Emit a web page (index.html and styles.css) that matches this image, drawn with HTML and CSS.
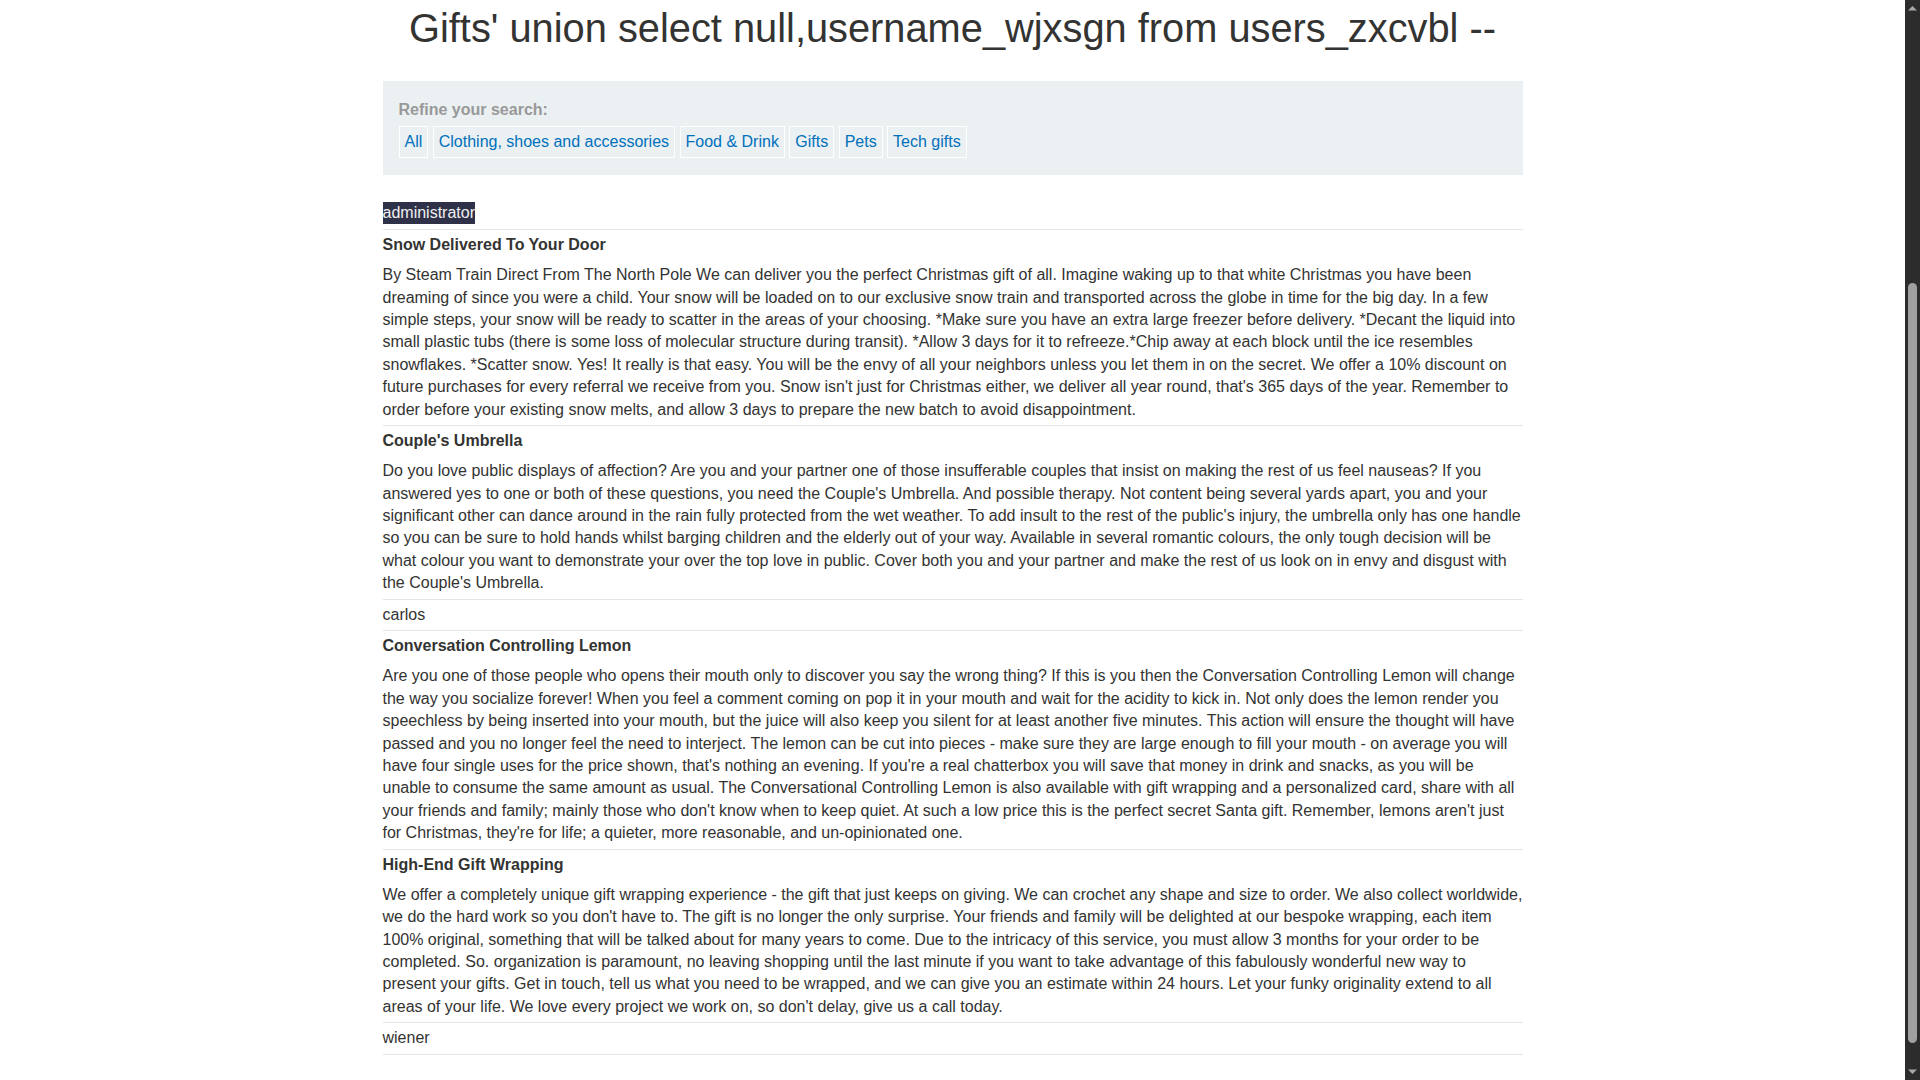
FILE: index.html
```html
<!DOCTYPE html>
<html lang="en">
<head>
<meta charset="utf-8">
<title>SQL injection UNION attack, retrieving data from other tables</title>
<link rel="stylesheet" href="styles.css">
</head>
<body>
<div class="viewport">
  <section class="container">
    <section class="page-heading">
      <h1 class="title">Gifts' union select null,username_wjxsgn from users_zxcvbl --</h1>
    </section>
    <section class="filter">
      <label class="filter-label">Refine your search:</label>
      <div class="filter-list">
        <a class="filter-btn" href="#">All</a>
        <a class="filter-btn" href="#">Clothing, shoes and accessories</a>
        <a class="filter-btn" href="#">Food &amp; Drink</a>
        <a class="filter-btn" href="#">Gifts</a>
        <a class="filter-btn" href="#">Pets</a>
        <a class="filter-btn" href="#">Tech gifts</a>
      </div>
    </section>
    <table class="products">
      <tbody>
        <tr class="row"><td class="cell"><span class="hl">administrator</span></td></tr>
        <tr class="name-row"><th class="name">Snow Delivered To Your Door</th></tr>
        <tr class="row"><td class="cell">By Steam Train Direct From The North Pole We can deliver you the perfect Christmas gift of all. Imagine waking up to that white Christmas you have been dreaming of since you were a child. Your snow will be loaded on to our exclusive snow train and transported across the globe in time for the big day. In a few simple steps, your snow will be ready to scatter in the areas of your choosing. *Make sure you have an extra large freezer before delivery. *Decant the liquid into small plastic tubs (there is some loss of molecular structure during transit). *Allow 3 days for it to refreeze.*Chip away at each block until the ice resembles snowflakes. *Scatter snow. Yes! It really is that easy. You will be the envy of all your neighbors unless you let them in on the secret. We offer a 10% discount on future purchases for every referral we receive from you. Snow isn't just for Christmas either, we deliver all year round, that's 365 days of the year. Remember to order before your existing snow melts, and allow 3 days to prepare the new batch to avoid disappointment.</td></tr>
        <tr class="name-row"><th class="name">Couple's Umbrella</th></tr>
        <tr class="row"><td class="cell">Do you love public displays of affection? Are you and your partner one of those insufferable couples that insist on making the rest of us feel nauseas? If you answered yes to one or both of these questions, you need the Couple's Umbrella. And possible therapy. Not content being several yards apart, you and your significant other can dance around in the rain fully protected from the wet weather. To add insult to the rest of the public's injury, the umbrella only has one handle so you can be sure to hold hands whilst barging children and the elderly out of your way. Available in several romantic colours, the only tough decision will be what colour you want to demonstrate your over the top love in public. Cover both you and your partner and make the rest of us look on in envy and disgust with the Couple's Umbrella.</td></tr>
        <tr class="row"><td class="cell">carlos</td></tr>
        <tr class="name-row"><th class="name">Conversation Controlling Lemon</th></tr>
        <tr class="row"><td class="cell">Are you one of those people who opens their mouth only to discover you say the wrong thing? If this is you then the Conversation Controlling Lemon will change the way you socialize forever! When you feel a comment coming on pop it in your mouth and wait for the acidity to kick in. Not only does the lemon render you speechless by being inserted into your mouth, but the juice will also keep you silent for at least another five minutes. This action will ensure the thought will have passed and you no longer feel the need to interject. The lemon can be cut into pieces - make sure they are large enough to fill your mouth - on average you will have four single uses for the price shown, that's nothing an evening. If you're a real chatterbox you will save that money in drink and snacks, as you will be unable to consume the same amount as usual. The Conversational Controlling Lemon is also available with gift wrapping and a personalized card, share with all your friends and family; mainly those who don't know when to keep quiet. At such a low price this is the perfect secret Santa gift. Remember, lemons aren't just for Christmas, they're for life; a quieter, more reasonable, and un-opinionated one.</td></tr>
        <tr class="name-row"><th class="name">High-End Gift Wrapping</th></tr>
        <tr class="row"><td class="cell">We offer a completely unique gift wrapping experience - the gift that just keeps on giving. We can crochet any shape and size to order. We also collect worldwide, we do the hard work so you don't have to. The gift is no longer the only surprise. Your friends and family will be delighted at our bespoke wrapping, each item 100% original, something that will be talked about for many years to come. Due to the intricacy of this service, you must allow 3 months for your order to be completed. So. organization is paramount, no leaving shopping until the last minute if you want to take advantage of this fabulously wonderful new way to present your gifts. Get in touch, tell us what you need to be wrapped, and we can give you an estimate within 24 hours. Let your funky originality extend to all areas of your life. We love every project we work on, so don't delay, give us a call today.</td></tr>
        <tr class="row"><td class="cell">wiener</td></tr>
      </tbody>
    </table>
  </section>
</div>
<div class="scrollbar">
  <div class="sb-arrow">
    <svg width="15" height="15" viewBox="0 0 15 15"><polygon points="3,10.5 12,10.5 7.5,6" fill="#a8a8a8"/></svg>
  </div>
  <div class="sb-track">
    <div class="sb-thumb"></div>
  </div>
  <div class="sb-arrow">
    <svg width="15" height="15" viewBox="0 0 15 15"><polygon points="3,4.5 12,4.5 7.5,9" fill="#a8a8a8"/></svg>
  </div>
</div>
</body>
</html>
```

FILE: styles.css
```css
html {
  background: #ffffff;
  overflow: hidden;
}
body {
  margin: 0;
  height: 100vh;
  display: flex;
  background: #ffffff;
  color: #333332;
  font-family: "Liberation Sans", Arial, Helvetica, sans-serif;
  font-size: 16px;
  line-height: 1.4;
}
.viewport {
  flex: 1;
  min-width: 0;
}
.container {
  width: 1140px;
  margin: 0 auto;
}
.page-heading {
  text-align: center;
}
.title {
  margin: 0;
  padding-top: 4px;
  font-size: 39.8px;
  font-weight: normal;
  line-height: 48px;
  color: #333332;
}
.filter {
  margin-top: 29px;
  background: #ebf0f2;
  padding: 18px 16px 17px;
}
.filter-label {
  display: block;
  color: #999999;
  font-weight: bold;
  margin-bottom: 4.6px;
}
.filter-list {
  display: flex;
  flex-wrap: wrap;
  gap: 4.45px;
}
.filter-btn {
  display: block;
  border: 1px solid #ffffff;
  padding: 4px 5px;
  color: #0071bc;
  text-decoration: none;
}
.products {
  width: 100%;
  margin-top: 23px;
  border-collapse: collapse;
}
.row {
  border-bottom: 1px solid #e6e6e6;
}
.cell {
  padding: 4px 0;
  text-align: left;
}
.name {
  padding: 4px 0;
  text-align: left;
  font-weight: bold;
}
.hl {
  display: inline-block;
  background: #2e3148;
  color: #f0f0f0;
  line-height: 22px;
}
.scrollbar {
  width: 15px;
  flex: none;
  background: #2c2c2c;
  display: flex;
  flex-direction: column;
}
.sb-arrow {
  height: 15px;
  flex: none;
}
.sb-arrow svg {
  display: block;
}
.sb-track {
  flex: 1;
  padding: 268px 3px 0;
}
.sb-thumb {
  height: 760px;
  background: #a0a0a0;
  border-radius: 4.5px;
}
```
